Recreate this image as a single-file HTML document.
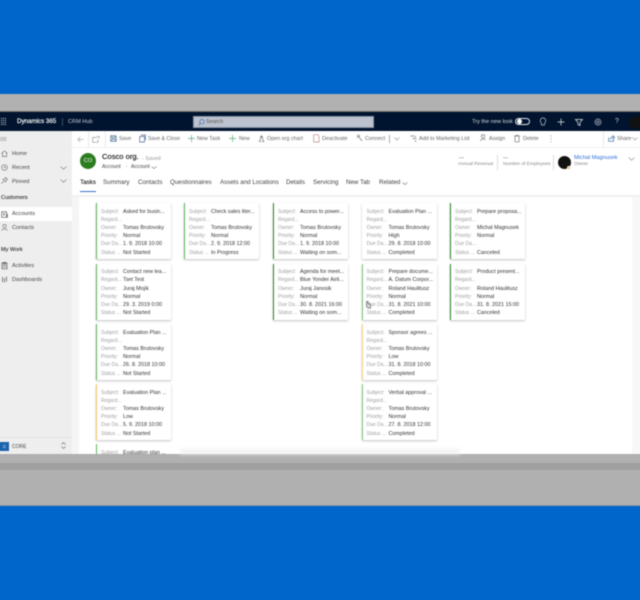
<!DOCTYPE html>
<html><head><meta charset="utf-8"><style>
html,body{margin:0;padding:0;width:640px;height:600px;overflow:hidden;background:#0066cc}
body{position:relative;font-family:"Liberation Sans",sans-serif;color:#333}
.a{position:absolute}
.t{position:absolute;white-space:nowrap;line-height:8px;font-size:5.4px;color:#444}
#app{position:absolute;left:0;top:0;width:640px;height:600px;filter:blur(.45px)}
.card{position:absolute;width:75px;height:56px;background:#fff;box-shadow:0 1px 2px rgba(0,0,0,.24);box-sizing:border-box;border-left:1.5px solid #5cb85c}
.card div{position:absolute;left:4px;height:8px;line-height:8px;font-size:5px;white-space:nowrap;color:#a0a0a0}
.card div b{position:absolute;left:22px;top:0;font-weight:normal;color:#333;font-size:5.4px}
.l1{top:4.600px}.l2{top:12.800px}.l3{top:21px}.l4{top:29.200px}.l5{top:37.400px}.l6{top:45.600px}
svg{position:absolute;overflow:visible;fill:none;stroke-width:.7}
</style></head><body><div id="app">
<div class="a" style="left:-10px;top:94px;width:660px;height:18px;background:#b1b1b1"></div>
<div class="a" style="left:-10px;top:111px;width:660px;height:1px;background:#6e6e6e"></div>
<div class="a" style="left:-10px;top:112px;width:660px;height:19px;background:#01142f"></div>
<div class="a" style="left:-10px;top:131px;width:660px;height:323px;background:#f7f7f7"></div>
<div class="a" style="left:-10px;top:454px;width:660px;height:51px;background:#b0b0b0"></div>
<div class="a" style="left:-10px;top:463px;width:660px;height:7px;background:#a0a0a0"></div>
<div class="a" style="left:-10px;top:505px;width:660px;height:1px;background:#8f959c"></div>

<svg style="left:1px;top:118px" width="6" height="8" stroke="#c8ced8" stroke-dasharray="1 1"><path d="M0 .5H6M0 2.500H6M0 4.500H6M0 6.500H6" stroke-width="1"/></svg>
<div class="t" style="left:17px;top:118px;color:#fff;font-size:6.200px;-webkit-text-stroke:.15px #fff">Dynamics 365</div>
<div class="a" style="left:62px;top:118px;width:1px;height:8px;background:#3a4a62"></div>
<div class="t" style="left:68px;top:118px;color:#c5cbd5;font-size:5.600px">CRM Hub</div>
<div class="a" style="left:193px;top:116px;width:181px;height:12px;background:#bcc3ce;box-sizing:border-box;border:1px solid #8b95a6"></div>
<svg style="left:198px;top:119px" width="7" height="7" stroke="#3d6fb0"><circle cx="4" cy="2.700" r="2.200"/><path d="M2.400 4.400L.5 6.400"/></svg>
<div class="t" style="left:206px;top:118px;color:#555;font-size:5.400px">Search</div>
<div class="t" style="left:472px;top:118px;color:#d5d9e0;font-size:5.600px">Try the new look</div>
<div class="a" style="left:515px;top:118px;width:15px;height:7px;border:.7px solid #dfe3e8;border-radius:4px;box-sizing:border-box"></div>
<div class="a" style="left:517px;top:119px;width:5px;height:5px;border-radius:50%;background:#fff"></div>
<svg style="left:539px;top:117px" width="8" height="10" stroke="#b9bfc9"><path d="M2.500 6.500C.5 4.500 1 1 4 1S7.500 4.500 5.500 6.500V8H2.500Z"/></svg>
<svg style="left:557px;top:118px" width="8" height="8" stroke="#e5e8ec"><path d="M4 .5V7.500M.5 4H7.500"/></svg>
<svg style="left:575px;top:119px" width="8" height="7" stroke="#e5e8ec"><path d="M.5.500H7.500L5 3.500V6.500L3 5.500V3.500Z"/></svg>
<svg style="left:594px;top:118px" width="8" height="8" stroke="#b9bfc9"><circle cx="4" cy="4" r="3"/><circle cx="4" cy="4" r="1.200"/></svg>
<div class="t" style="left:615px;top:118px;color:#c5cbd5;font-size:7px">?</div>
<div class="a" style="left:629px;top:116px;width:13px;height:13px;border-radius:50%;background:#111"></div>

<div class="a" style="left:-10px;top:131px;width:82px;height:323px;background:#eeeeee"></div>
<svg style="left:0;top:137px" width="7" height="4" stroke="#888"><path d="M0 .5H6.500M0 2H6.500M0 3.500H6.500" stroke-width=".5"/></svg>
<svg style="left:1px;top:150px" width="7" height="7" stroke="#777"><path d="M.5 3.500L3.500 .8 6.500 3.500M1.500 3V6.500H5.500V3"/></svg>
<div class="t" style="left:12px;top:150.400px;font-size:5.600px">Home</div>
<svg style="left:1px;top:164px" width="7" height="7" stroke="#777"><circle cx="3.500" cy="3.500" r="2.800"/><path d="M3.500 1.800V3.600H5"/></svg>
<div class="t" style="left:12px;top:164px;font-size:5.600px">Recent</div>
<svg style="left:60px;top:166px" width="7" height="4" stroke="#888"><path d="M.5.500L3.500 3.300 6.500.500"/></svg>
<svg style="left:1px;top:177px" width="7" height="7" stroke="#777"><path d="M.5 6.500L2.500 4.500M2 2.500L4.500 5 5 3.500 6.500 2.500 4.500.5 3.500 2Z"/></svg>
<div class="t" style="left:12px;top:177.600px;font-size:5.600px">Pinned</div>
<svg style="left:60px;top:179px" width="7" height="4" stroke="#888"><path d="M.5.500L3.500 3.300 6.500.500"/></svg>
<div class="t" style="left:1px;top:194px;color:#333;-webkit-text-stroke:.12px #333;font-size:5.500px">Customers</div>
<div class="a" style="left:-10px;top:207px;width:82px;height:14px;background:#fff"></div>
<svg style="left:1px;top:211px" width="7" height="7" stroke="#555"><path d="M.7.700H5.500V6.300H.7ZM5.500 3.500H6.500V6.300H5.500M2 2.500H4M2 4H4"/></svg>
<div class="t" style="left:12px;top:210.400px;font-size:5.600px">Accounts</div>
<svg style="left:1px;top:224px" width="7" height="7" stroke="#777"><circle cx="3.500" cy="2.200" r="1.700"/><path d="M.7 6.700C1 4.500 6 4.500 6.300 6.700"/></svg>
<div class="t" style="left:12px;top:224px;font-size:5.600px">Contacts</div>
<div class="t" style="left:1px;top:246px;color:#333;-webkit-text-stroke:.12px #333;font-size:5.500px">My Work</div>
<svg style="left:1px;top:262px" width="7" height="7" stroke="#555"><path d="M1 1H6V6.800H1ZM2.500 .5H4.500V1.500H2.500ZM2 3H5M2 4.800H5"/></svg>
<div class="t" style="left:12px;top:262px;font-size:5.600px">Activities</div>
<svg style="left:1px;top:276px" width="7" height="7" stroke="#555" stroke-width="1"><path d="M1.500 1V6M3.500 2V6.500M5.500 .5V5.500"/></svg>
<div class="t" style="left:12px;top:276px;font-size:5.600px">Dashboards</div>
<div class="a" style="left:-10px;top:437px;width:82px;height:1px;background:#e4e4e4"></div>
<div class="a" style="left:-10px;top:441.500px;width:19px;height:9.500px;background:#1b63ad"></div>
<div class="t" style="left:3px;top:442.500px;font-size:4.500px;color:#fff">C</div>
<div class="t" style="left:12px;top:442.500px;font-size:5px">CORE</div>
<svg style="left:61px;top:442px" width="5" height="7" stroke="#777" stroke-width=".5"><path d="M.5 2.500L2.500.5 4.500 2.500M.5 4.500L2.500 6.500 4.500 4.500"/></svg>

<div class="a" style="left:72px;top:131px;width:578px;height:17px;background:#fff"></div>
<div class="a" style="left:72px;top:148px;width:578px;height:47px;background:#fff"></div>
<div class="a" style="left:72px;top:195px;width:578px;height:2px;background:#f0f0f0"></div>
<div class="a" style="left:79px;top:197px;width:571px;height:257px;background:#fff"></div>
<div class="a" style="left:72px;top:197px;width:7px;height:257px;background:#f5f5f5"></div>
<div class="a" style="left:632px;top:197px;width:18px;height:257px;background:#f8f8f8"></div>
<div class="a" style="left:72px;top:147px;width:578px;height:1px;background:#efefef"></div>
<div class="a" style="left:88px;top:131px;width:1px;height:16px;background:#eaeaea"></div>
<div class="a" style="left:105px;top:131px;width:1px;height:16px;background:#eaeaea"></div>
<div class="a" style="left:603px;top:131px;width:1px;height:16px;background:#eaeaea"></div>

<svg style="left:77px;top:136px" width="7" height="7" stroke="#aaa"><path d="M6.500 3.500H.8M3.300 1L.8 3.500 3.300 6"/></svg>
<svg style="left:92px;top:136px" width="8" height="7" stroke="#999"><path d="M5 1.500H.7V6.300H6V3.500M5 .5H7.200V2.500"/></svg>
<svg style="left:110px;top:135px" width="7" height="7" stroke="#4a6a90"><path d="M.7.700H5.500L6.300 1.500V6.300H.7ZM2 .7V2.500H5V.7M2 6.300V4H5V6.300"/></svg>
<div class="t" style="left:119px;top:135px;color:#666">Save</div>
<svg style="left:139px;top:134px" width="7" height="9" stroke="#4a6a90"><path d="M.7 2.500H5.500V8H.7ZM2 1H6.500V6"/></svg>
<div class="t" style="left:148px;top:135px;color:#666;font-size:5.300px">Save &amp; Close</div>
<svg style="left:188px;top:135px" width="7" height="7" stroke="#5aaa78"><path d="M3.500 0V7M0 3.500H7"/></svg>
<div class="t" style="left:197px;top:135px;color:#666">New Task</div>
<svg style="left:229px;top:135px" width="7" height="7" stroke="#5aaa78"><path d="M3.500 0V7M0 3.500H7"/></svg>
<div class="t" style="left:239px;top:135px;color:#666">New</div>
<svg style="left:258px;top:135px" width="7" height="7" stroke="#777"><path d="M2.500 2L3.500.7 4.500 2ZM1 6.500H3M4 6.500H6.300M1.500 6L3 2.500M5.500 6L4 2.500"/></svg>
<div class="t" style="left:267px;top:135px;color:#666">Open org chart</div>
<svg style="left:313px;top:134px" width="7" height="9" stroke="#b88"><path d="M.7.700H4.500L6 2.200V8H.7Z"/></svg>
<div class="t" style="left:322px;top:135px;color:#666">Deactivate</div>
<svg style="left:356px;top:134px" width="7" height="8" stroke="#777"><path d="M1 .7L3 2.500M.7 3H3M3.500.7V2.500M3 3L6 7"/></svg>
<div class="t" style="left:365px;top:135px;color:#666">Connect</div>
<div class="a" style="left:389px;top:135px;width:.7px;height:8px;background:#aaa"></div>
<svg style="left:394px;top:137px" width="6" height="4" stroke="#999"><path d="M.5.500L3 3 5.500.5"/></svg>
<svg style="left:410px;top:135px" width="7" height="7" stroke="#777"><path d="M.5 1H4.500M2.500 3.500H6.500M4.500 6H6.500M5.500 1V2.500"/></svg>
<div class="t" style="left:419px;top:135px;color:#666">Add to Marketing List</div>
<svg style="left:480px;top:134px" width="7" height="8" stroke="#778"><circle cx="3" cy="2.300" r="1.700"/><path d="M.5 7C.8 4.500 5 4.500 5.500 6"/></svg>
<div class="t" style="left:489px;top:135px;color:#666">Assign</div>
<svg style="left:514px;top:135px" width="6" height="7" stroke="#777"><path d="M0 1H6M1 1V6.800H5V1M2 .2H4"/></svg>
<div class="t" style="left:523px;top:135px;color:#666">Delete</div>
<svg style="left:550px;top:135px" width="2" height="7" stroke="#777" stroke-width="1" stroke-dasharray="1 1.800"><path d="M1 .5V7"/></svg>
<svg style="left:608px;top:135px" width="7" height="7" stroke="#3b6ea8"><path d="M.7 2.500V6.300H5.500V4.500M2.500 4.500C2.500 3 3.500 2 5 2V.7L6.700 2.500 5 4V3"/></svg>
<div class="t" style="left:617px;top:135px;color:#666">Share</div>
<svg style="left:632px;top:137px" width="6" height="4" stroke="#999"><path d="M.5.500L3 3 5.500.5"/></svg>

<div class="a" style="left:80px;top:153px;width:16px;height:16px;border-radius:50%;background:#2b7d1f;color:#fff;font-size:5.600px;line-height:16px;text-align:center">CO</div>
<div class="t" style="left:102px;top:153px;font-size:7.600px;color:#222;-webkit-text-stroke:.15px #222">Cosco org.</div>
<div class="t" style="left:142px;top:155px;font-size:5.400px;color:#999">- Saved</div>
<div class="t" style="left:102px;top:163px;font-size:5.200px">Account</div>
<div class="t" style="left:126px;top:163px;font-size:5.200px">·</div>
<div class="t" style="left:131px;top:163px;font-size:5.200px">Account</div>
<svg style="left:151px;top:166px" width="6" height="3" stroke="#888"><path d="M.5.500L3 2.500 5.500.5"/></svg>

<div class="t" style="left:80px;top:179px;font-size:6.200px;color:#222;-webkit-text-stroke:.12px #222">Tasks</div>
<div class="t" style="left:103px;top:179px;font-size:6.200px">Summary</div>
<div class="t" style="left:138px;top:179px;font-size:6.200px">Contacts</div>
<div class="t" style="left:170px;top:179px;font-size:6.200px">Questionnaires</div>
<div class="t" style="left:220px;top:179px;font-size:6.200px">Assets and Locations</div>
<div class="t" style="left:286px;top:179px;font-size:6.200px">Details</div>
<div class="t" style="left:313px;top:179px;font-size:6.200px">Servicing</div>
<div class="t" style="left:346px;top:179px;font-size:6.200px">New Tab</div>
<div class="t" style="left:379px;top:179px;font-size:6.200px">Related</div>
<svg style="left:402px;top:182px" width="6" height="3" stroke="#888"><path d="M.5.500L3 2.500 5.500.5"/></svg>
<div class="a" style="left:80px;top:190.500px;width:16px;height:1px;background:#3b6fc4"></div>

<div class="t" style="left:459px;top:154px;font-size:5px">---</div>
<div class="t" style="left:458px;top:161px;font-size:4.800px;color:#888">Annual Revenue</div>
<div class="a" style="left:497px;top:155px;width:.7px;height:15px;background:#ddd"></div>
<div class="t" style="left:503px;top:154px;font-size:5px">---</div>
<div class="t" style="left:503px;top:161px;font-size:4.800px;color:#888">Number of Employees</div>
<div class="a" style="left:553px;top:155px;width:.7px;height:15px;background:#ddd"></div>
<div class="a" style="left:558px;top:156px;width:13px;height:13px;border-radius:50%;background:#111"></div>
<div class="a" style="left:567px;top:166px;width:4px;height:4px;border-radius:50%;background:#f5a623;border:.5px solid #fff;box-sizing:border-box"></div>
<div class="t" style="left:574px;top:154px;font-size:5.600px;color:#2f6fd8">Michal Magnusek</div>
<div class="t" style="left:574px;top:161px;font-size:4.800px;color:#888">Owner</div>
<svg style="left:628px;top:157px" width="7" height="4" stroke="#999"><path d="M.5.500L3.500 3.300 6.500.5"/></svg>

<div class="card" style="left:96px;top:203px"><div class="l1">Subject:<b>Asked for busin...</b></div><div class="l2">Regard...</div><div class="l3">Owner:<b>Tomas Brutovsky</b></div><div class="l4">Priority:<b>Normal</b></div><div class="l5">Due Da...<b>1. 9. 2018 10:00</b></div><div class="l6">Status ...<b>Not Started</b></div></div>
<div class="card" style="left:96px;top:263.500px"><div class="l1">Subject:<b>Contact new lea...</b></div><div class="l2">Regard...<b>Tset Test</b></div><div class="l3">Owner:<b>Juraj Mojik</b></div><div class="l4">Priority:<b>Normal</b></div><div class="l5">Due Da...<b>29. 3. 2019 0:00</b></div><div class="l6">Status ...<b>Not Started</b></div></div>
<div class="card" style="left:96px;top:324px"><div class="l1">Subject:<b>Evaluation Plan ...</b></div><div class="l2">Regard...</div><div class="l3">Owner:<b>Tomas Brutovsky</b></div><div class="l4">Priority:<b>Normal</b></div><div class="l5">Due Da...<b>26. 8. 2018 10:00</b></div><div class="l6">Status ...<b>Not Started</b></div></div>
<div class="card" style="left:96px;top:384px;border-left-color:#ffc36b"><div class="l1">Subject:<b>Evaluation Plan ...</b></div><div class="l2">Regard...</div><div class="l3">Owner:<b>Tomas Brutovsky</b></div><div class="l4">Priority:<b>Low</b></div><div class="l5">Due Da...<b>5. 9. 2018 10:00</b></div><div class="l6">Status ...<b>Not Started</b></div></div>
<div class="a" style="left:96px;top:444px;width:75px;height:10px;overflow:hidden"><div class="card" style="left:0;top:0"><div class="l1">Subject:<b>Evaluation plan ...</b></div></div></div>

<div class="card" style="left:184px;top:203px"><div class="l1">Subject:<b>Check sales liter...</b></div><div class="l2">Regard...</div><div class="l3">Owner:<b>Tomas Brutovsky</b></div><div class="l4">Priority:<b>Normal</b></div><div class="l5">Due Da...<b>2. 9. 2018 12:00</b></div><div class="l6">Status ...<b>In Progress</b></div></div>

<div class="card" style="left:273px;top:203px;border-left-color:#2a8a2a"><div class="l1">Subject:<b>Access to power...</b></div><div class="l2">Regard...</div><div class="l3">Owner:<b>Tomas Brutovsky</b></div><div class="l4">Priority:<b>Normal</b></div><div class="l5">Due Da...<b>1. 9. 2018 10:00</b></div><div class="l6">Status ...<b>Waiting on som...</b></div></div>
<div class="card" style="left:273px;top:263.500px;border-left-color:#2a8a2a"><div class="l1">Subject:<b>Agenda for meet...</b></div><div class="l2">Regard...<b>Blue Yonder Airli...</b></div><div class="l3">Owner:<b>Juraj Janosik</b></div><div class="l4">Priority:<b>Normal</b></div><div class="l5">Due Da...<b>30. 8. 2021 16:00</b></div><div class="l6">Status ...<b>Waiting on som...</b></div></div>

<div class="card" style="left:361.500px;top:203px;border-left-color:#fff"><div class="l1">Subject:<b>Evaluation Plan ...</b></div><div class="l2">Regard...</div><div class="l3">Owner:<b>Tomas Brutovsky</b></div><div class="l4">Priority:<b>High</b></div><div class="l5">Due Da...<b>29. 8. 2018 10:00</b></div><div class="l6">Status ...<b>Completed</b></div></div>
<div class="card" style="left:361.500px;top:263.500px;border-left-color:#7fc77f"><div class="l1">Subject:<b>Prepare docume...</b></div><div class="l2">Regard...<b>A. Datum Corpor...</b></div><div class="l3">Owner:<b>Roland Haulitusz</b></div><div class="l4">Priority:<b>Normal</b></div><div class="l5">Due Da...<b>31. 8. 2021 10:00</b></div><div class="l6">Status ...<b>Completed</b></div></div>
<div class="card" style="left:361.500px;top:324px;border-left-color:#ffcf87"><div class="l1">Subject:<b>Sponsor agrees ...</b></div><div class="l2">Regard...</div><div class="l3">Owner:<b>Tomas Brutovsky</b></div><div class="l4">Priority:<b>Low</b></div><div class="l5">Due Da...<b>31. 8. 2018 10:00</b></div><div class="l6">Status ...<b>Completed</b></div></div>
<div class="card" style="left:361.500px;top:384px;border-left-color:#7fc77f"><div class="l1">Subject:<b>Verbal approval ...</b></div><div class="l2">Regard...</div><div class="l3">Owner:<b>Tomas Brutovsky</b></div><div class="l4">Priority:<b>Normal</b></div><div class="l5">Due Da...<b>27. 8. 2018 12:00</b></div><div class="l6">Status ...<b>Completed</b></div></div>

<div class="card" style="left:450px;top:203px;border-left-color:#2a8a2a"><div class="l1">Subject:<b>Prepare proposa...</b></div><div class="l2">Regard...</div><div class="l3">Owner:<b>Michal Magnusek</b></div><div class="l4">Priority:<b>Normal</b></div><div class="l5">Due Da...</div><div class="l6">Status ...<b>Canceled</b></div></div>
<div class="card" style="left:450px;top:263.500px;border-left-color:#2a8a2a"><div class="l1">Subject:<b>Product present...</b></div><div class="l2">Regard...</div><div class="l3">Owner:<b>Roland Haulitusz</b></div><div class="l4">Priority:<b>Normal</b></div><div class="l5">Due Da...<b>31. 8. 2021 15:00</b></div><div class="l6">Status ...<b>Canceled</b></div></div>

<svg style="left:365px;top:300px" width="6" height="9" stroke="#666"><path d="M1.500 1.500V6.500L3 8H5.500V4H3V1.500Z" fill="#ddd"/></svg>
<div class="a" style="left:180px;top:449px;width:280px;height:5px;background:#f2f2f2;filter:blur(2px)"></div>
</div></body></html>
